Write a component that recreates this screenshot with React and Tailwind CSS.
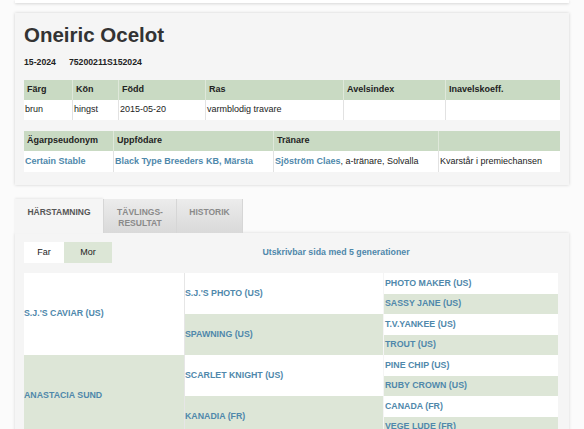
const LINK = 'text-[#4f88ab]';

const pedigree = {
  first: [
    { name: "S.J.'S CAVIAR (US)", green: false },
    { name: 'ANASTACIA SUND', green: true },
  ],
  second: [
    { name: "S.J.'S PHOTO (US)", green: false },
    { name: 'SPAWNING (US)', green: true },
    { name: 'SCARLET KNIGHT (US)', green: false },
    { name: 'KANADIA (FR)', green: true },
  ],
  third: [
    'PHOTO MAKER (US)',
    'SASSY JANE (US)',
    'T.V.YANKEE (US)',
    'TROUT (US)',
    'PINE CHIP (US)',
    'RUBY CROWN (US)',
    'CANADA (FR)',
    'VEGE LUDE (FR)',
  ],
};

function HeadCell({ children, first }) {
  return (
    <div
      className={`flex items-center pl-[3px] font-bold text-[#222] ${first ? '' : 'border-l border-[#dfe8da]'}`}
    >
      {children}
    </div>
  );
}

function DataCell({ children, first }) {
  return (
    <div className={`flex items-center pl-[1px] ${first ? '' : 'border-l border-[#e2e2e2]'}`}>
      {children}
    </div>
  );
}

export default function App() {
  return (
    <div className="min-h-[429px] overflow-hidden bg-[#fbfbfb] font-['Liberation_Sans',Arial,sans-serif] text-[#222]">
      {/* Previous card edge */}
      <div className="mx-[15px] h-[3px] bg-white shadow-[0_1px_3px_rgba(0,0,0,0.15)]" />

      {/* Horse card */}
      <div className="mx-[15px] mt-[10px] bg-[#f5f5f5] px-[9px] pb-[13px] pt-[8px] shadow-[0_0_3px_rgba(0,0,0,0.18)]">
        <h1 className="text-[20.5px] font-bold leading-[28px] text-[#333]">Oneiric Ocelot</h1>
        <div className="mt-[8px] flex gap-[13px] text-[8.7px] font-bold leading-[10px] text-[#222]">
          <span>15-2024</span>
          <span>75200211S152024</span>
        </div>

        <div className="mt-[13px] text-[9px]">
          <div className="grid h-[20px] grid-cols-[48px_46px_87px_138px_102px_113px] bg-[#c9dac3]">
            <HeadCell first>Färg</HeadCell>
            <HeadCell>Kön</HeadCell>
            <HeadCell>Född</HeadCell>
            <HeadCell>Ras</HeadCell>
            <HeadCell>Avelsindex</HeadCell>
            <HeadCell>Inavelskoeff.</HeadCell>
          </div>
          <div className="grid h-[20px] grid-cols-[48px_46px_87px_138px_102px_113px] bg-white">
            <DataCell first>brun</DataCell>
            <DataCell>hingst</DataCell>
            <DataCell>2015-05-20</DataCell>
            <DataCell>varmblodig travare</DataCell>
            <DataCell />
            <DataCell />
          </div>
        </div>

        <div className="mt-[11px] text-[9px]">
          <div className="grid h-[20px] grid-cols-[89px_160px_165px_120px] bg-[#c9dac3]">
            <HeadCell first>Ägarpseudonym</HeadCell>
            <HeadCell>Uppfödare</HeadCell>
            <HeadCell>Tränare</HeadCell>
            <HeadCell />
          </div>
          <div className="grid h-[21px] grid-cols-[89px_160px_165px_120px] bg-white">
            <DataCell first>
              <span className={`font-bold ${LINK}`}>Certain Stable</span>
            </DataCell>
            <DataCell>
              <span className={`font-bold ${LINK}`}>Black Type Breeders KB, Märsta</span>
            </DataCell>
            <DataCell>
              <span className={`font-bold ${LINK}`}>Sjöström Claes</span>
              <span>, a-tränare, Solvalla</span>
            </DataCell>
            <DataCell>Kvarstår i premiechansen</DataCell>
          </div>
        </div>
      </div>

      {/* Tabs */}
      <div className="mx-[15px] mt-[14px] flex h-[34px] text-[8.5px] font-bold uppercase leading-[11px]">
        <div className="w-[88px] bg-[#f5f5f5] pt-[8px] text-center text-[#555] shadow-[0_-1px_2px_rgba(0,0,0,0.08)]">
          Härstamning
        </div>
        <div className="w-[74px] border-x border-[#d6d6d6] bg-gradient-to-b from-[#ececec] to-[#d9d9d9] pt-[8px] text-center text-[#8a8a8a]">
          Tävlings-
          <br />
          resultat
        </div>
        <div className="w-[66px] border-r border-[#d6d6d6] bg-gradient-to-b from-[#ececec] to-[#d9d9d9] pt-[8px] text-center text-[#8a8a8a]">
          Historik
        </div>
      </div>

      {/* Pedigree panel */}
      <div className="mx-[15px] bg-[#f5f5f5] px-[9px] pt-[9px] shadow-[0_0_3px_rgba(0,0,0,0.15)]">
        <div className="flex h-[21px] items-center">
          <div className="flex h-full text-[9px]">
            <span className="flex w-[40px] items-center justify-center bg-white">Far</span>
            <span className="flex w-[48px] items-center justify-center bg-[#dce6d6]">Mor</span>
          </div>
          <div className={`flex-1 text-center text-[8.8px] font-bold ${LINK}`}>
            Utskrivbar sida med 5 generationer
          </div>
        </div>

        <div className={`mt-[10px] grid grid-cols-[160px_199px_175px] grid-rows-[repeat(8,20.5px)] text-[8.8px] font-bold ${LINK}`}>
          {pedigree.first.map((h, i) => (
            <div
              key={h.name}
              className={`col-start-1 row-span-4 flex items-center ${h.green ? 'bg-[#dde6d7]' : 'bg-white'}`}
              style={{ gridRowStart: i * 4 + 1 }}
            >
              {h.name}
            </div>
          ))}
          {pedigree.second.map((h, i) => (
            <div
              key={h.name}
              className={`col-start-2 row-span-2 flex items-center border-l border-[#e6e6e6] ${h.green ? 'bg-[#dde6d7]' : 'bg-white'}`}
              style={{ gridRowStart: i * 2 + 1 }}
            >
              {h.name}
            </div>
          ))}
          {pedigree.third.map((name, i) => (
            <div
              key={name}
              className={`col-start-3 flex items-center border-l border-[#f5f5f5] pl-[1px] ${i % 2 ? 'bg-[#dde6d7]' : 'bg-white'}`}
              style={{ gridRowStart: i + 1 }}
            >
              {name}
            </div>
          ))}
        </div>
      </div>
    </div>
  );
}
